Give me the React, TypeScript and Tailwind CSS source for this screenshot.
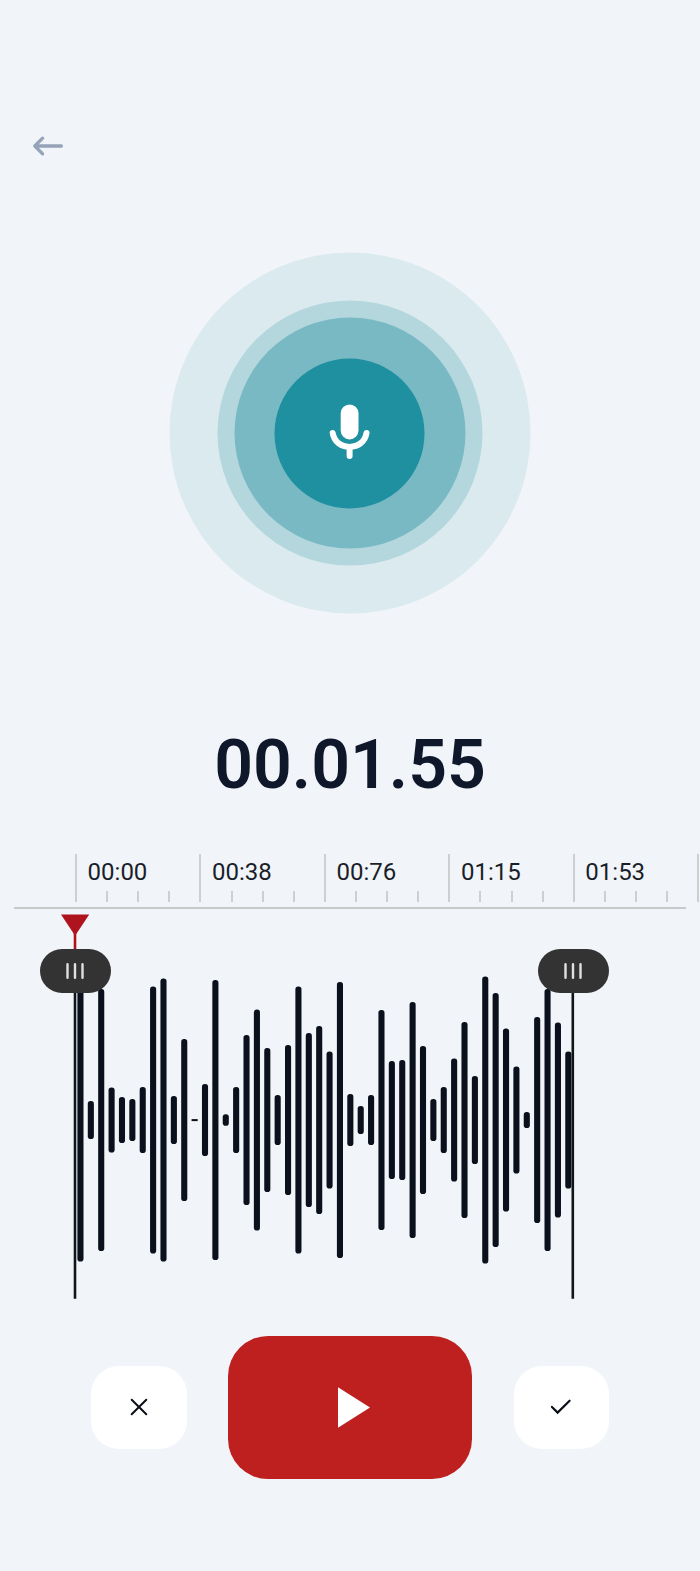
const SAMPLES = [
  283, 38, 262, 65, 46, 42, 66, 267, 283, 48, 162, 2, 72, 280, 11.5, 66,
  170, 221, 144, 50, 150, 267, 174, 188, 137, 276, 52, 28, 50, 220, 118, 120,
  236, 148, 42, 66, 123, 196, 88, 287, 254, 183, 107, 16, 206, 262, 195, 137
];

const MARKS = ["00:00", "00:38", "00:76", "01:15", "01:53"];

function Header() {
  return (
    <header className="h-[252px] px-[30px] pt-[128px]">
      <button type="button" aria-label="Back" className="block">
        <svg width="36" height="36" viewBox="0 0 36 36" fill="none">
          <path
            d="M31.4 18H5M12.6 10.2L4.8 18L12.6 25.8"
            stroke="#94a3b8"
            strokeWidth="3.3"
            strokeLinecap="round"
            strokeLinejoin="round"
          />
        </svg>
      </button>
    </header>
  );
}

function Microphone() {
  return (
    <div className="mx-auto flex size-[361px] -translate-x-[0.5px] translate-y-[0.5px] items-center justify-center rounded-full bg-[#dbeaef]">
      <div className="flex size-[265px] items-center justify-center rounded-full bg-[#b3d7dd]">
        <div className="flex size-[231px] items-center justify-center rounded-full bg-[#79b9c4]">
          <div className="flex size-[150px] items-center justify-center rounded-full bg-[#1f90a0]">
            <svg width="44" height="60" viewBox="0 0 44 60" fill="none">
              <rect x="13.2" y="0.9" width="17.8" height="35" rx="8.9" fill="#fff" />
              <path
                d="M5.2 29.5C6.6 38.1 13.4 43.4 22.1 43.4C30.8 43.4 37.6 38.1 39 29.5M22.1 44V52.4"
                stroke="#fff"
                strokeWidth="6"
                strokeLinecap="round"
              />
            </svg>
          </div>
        </div>
      </div>
    </div>
  );
}

function Ruler() {
  return (
    <div className="mt-[49px]">
      <div className="flex h-12 overflow-hidden pl-[75px]">
        {MARKS.map((mark) => (
          <div key={mark} className="flex w-[124.45px] shrink-0 flex-col justify-between border-l-2 border-[#cecfd1]">
            <span className="pl-[10.6px] pt-[2px] text-[24px] leading-8 text-[#1a1e29]">{mark}</span>
            <div className="flex h-[11.5px] pl-[29.1px]">
              <i className="w-[31.1px] border-l-2 border-[#cecfd1]" />
              <i className="w-[31.1px] border-l-2 border-[#cecfd1]" />
              <i className="w-[31.1px] border-l-2 border-[#cecfd1]" />
            </div>
          </div>
        ))}
        <div className="w-[2px] shrink-0 bg-[#cecfd1]" />
      </div>
      <div className="mx-[14px] mt-[5px] h-[2px] bg-[#c8c9cb]" />
    </div>
  );
}

function Grip() {
  return (
    <div className="flex h-11 w-[71px] items-center justify-center rounded-full bg-[#333333]">
      <svg width="20" height="16" viewBox="0 0 20 16">
        <path d="M2.5 1.2V14.8M10 1.2V14.8M17.5 1.2V14.8" stroke="#e0e0e0" strokeWidth="2.4" strokeLinecap="round" />
      </svg>
    </div>
  );
}

function Waveform() {
  return (
    <div className="relative h-[390px]">
      <svg width="700" height="390" viewBox="0 909 700 390" className="block">
        {SAMPLES.map((height, i) => (
          <rect
            key={i}
            x={77.4 + i * 10.38}
            y={1120.1 - height / 2}
            width="6.1"
            height={height}
            rx={height > 4 ? 2.8 : 0}
            fill="#0a101c"
          />
        ))}
        <path d="M75 980V1298.7M572.8 980V1298.7" stroke="#111518" strokeWidth="2.6" />
        <path d="M75 930V952" stroke="#b31018" strokeWidth="2.6" />
        <path d="M61 914.5H89.2L75.1 935.8Z" fill="#ae131e" />
      </svg>
      <div className="absolute left-[39.5px] top-[39.5px]">
        <Grip />
      </div>
      <div className="absolute left-[537.5px] top-[39.5px]">
        <Grip />
      </div>
    </div>
  );
}

function Controls() {
  return (
    <div className="mt-[36.5px] flex items-center justify-center gap-[41.5px]">
      <button type="button" aria-label="Discard" className="flex h-[83px] w-[95.5px] items-center justify-center rounded-[28px] bg-white">
        <svg width="20" height="20" viewBox="0 0 20 20" fill="none">
          <path d="M2.7 2.7L17.3 17.3M17.3 2.7L2.7 17.3" stroke="#0b0f18" strokeWidth="2" strokeLinecap="round" />
        </svg>
      </button>
      <button type="button" aria-label="Play" className="flex h-[143.5px] w-[244px] items-center justify-center rounded-[40px] bg-[#be2020] pl-[7px]">
        <svg width="32" height="41" viewBox="0 0 32 41">
          <path d="M0 0.3L32 20.5L0 40.7Z" fill="#fff" />
        </svg>
      </button>
      <button type="button" aria-label="Save" className="flex h-[83px] w-[95.5px] items-center justify-center rounded-[28px] bg-white">
        <svg width="22" height="18" viewBox="0 0 22 18" fill="none">
          <path d="M2 8.9L7.6 14.6L19.6 2.7" stroke="#0b0f18" strokeWidth="2.2" strokeLinecap="round" />
        </svg>
      </button>
    </div>
  );
}

export default function App() {
  return (
    <main className="h-[1571px] w-[700px] overflow-hidden bg-slate-100 font-['Roboto',sans-serif]">
      <Header />
      <Microphone />
      <h1 className="mt-[112px] text-center text-[68px] font-semibold leading-[80px] text-slate-900">00.01.55</h1>
      <Ruler />
      <Waveform />
      <Controls />
    </main>
  );
}
